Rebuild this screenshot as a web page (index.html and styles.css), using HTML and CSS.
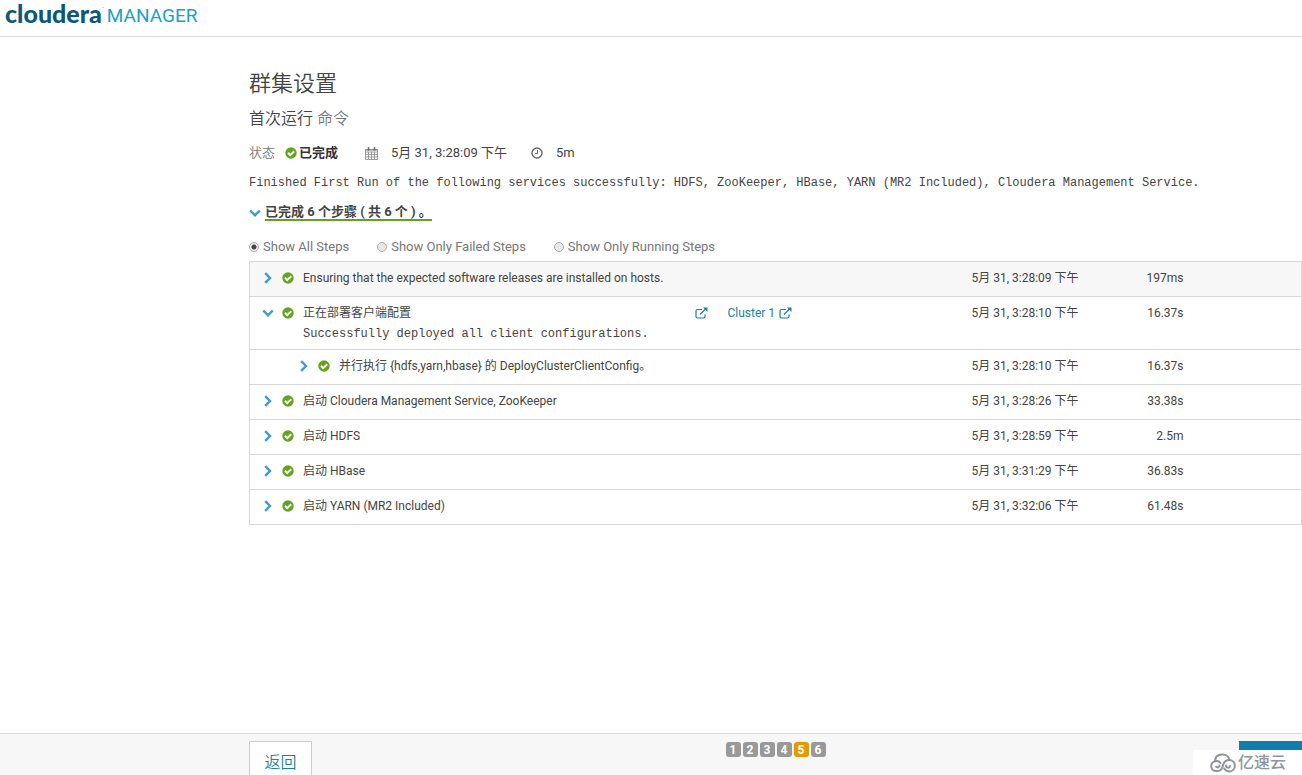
FILE: index.html
```html
<!DOCTYPE html>
<html lang="zh-CN">
<head>
<meta charset="utf-8">
<title>群集设置 - Cloudera Manager</title>
<link rel="stylesheet" href="styles.css">
</head>
<body>
<svg class="sprite" aria-hidden="true">
  <symbol id="check" viewBox="0 0 12 12"><circle cx="6" cy="6" r="5.700" fill="#63a41f"/><path d="M3 5.800l2.200 2.300L9.200 4.200" fill="none" stroke="#fff" stroke-width="2"/></symbol>
  <symbol id="right" viewBox="0 0 12 12"><path d="M3.200 1.200L8 6l-4.800 4.800" fill="none" stroke="#3b9bd2" stroke-width="2.400"/></symbol>
  <symbol id="down" viewBox="0 0 12 12"><path d="M1.200 3.500L6 8.300l4.800-4.800" fill="none" stroke="#3b9bd2" stroke-width="2.400"/></symbol>
  <symbol id="external" viewBox="0 0 13 13"><path d="M7 2.500H2.500Q1 2.500 1 4v5.500Q1 11 2.500 11h6q1.500 0 1.500-1.500V7.500M5 7.500l5.500-5.500" fill="none" stroke="#1c7f9f" stroke-width="1.200"/><path d="M8 .5h4.500V5z" fill="#1c7f9f"/></symbol>
</svg>
<header class="top">
  <a class="brand" href="#"><span class="brand-name">cloudera</span><span class="brand-dot">·</span><span class="brand-product">MANAGER</span></a>
</header>
<main class="content">
  <h1 class="title">群集设置</h1>
  <h2 class="subtitle">首次运行 <span class="muted">命令</span></h2>
  <div class="status">
    <span class="muted">状态</span>
    <span class="state"><svg class="icon"><use href="#check"/></svg><strong>已完成</strong></span>
    <svg class="calendar" viewBox="0 0 13 13"><path d="M.5 2.500h12v10H.5zM.5 5h12M.5 7.500h12M.5 10h12M3.500 5v7.500M6.500 5v7.500M9.500 5v7.500" fill="none" stroke="#888" stroke-width=".8"/><path d="M.5 3h12" stroke="#777"/><path d="M3.500 0v3.500M9.500 0v3.500" stroke="#666" stroke-width="1.500"/></svg>
    <span>5月 31, 3:28:09 下午</span>
    <svg class="clock" viewBox="0 0 12 12"><circle cx="6" cy="6" r="5" fill="none" stroke="#666" stroke-width="1.400"/><path d="M6.500 3v3.500H4" fill="none" stroke="#666"/></svg>
    <span>5m</span>
  </div>
  <p class="message">Finished First Run of the following services successfully: HDFS, ZooKeeper, HBase, YARN (MR2 Included), Cloudera Management Service.</p>
  <button class="summary" type="button"><svg class="icon"><use href="#down"/></svg><span class="summary-text">已完成 6 个步骤 ( 共 6 个 ) 。</span></button>
  <div class="filters">
    <label class="filter"><input type="radio" name="steps" checked>Show All Steps</label>
    <label class="filter"><input type="radio" name="steps">Show Only Failed Steps</label>
    <label class="filter"><input type="radio" name="steps">Show Only Running Steps</label>
  </div>
  <table class="steps">
    <colgroup><col><col class="col-links"><col class="col-time"><col class="col-duration"><col class="col-actions"></colgroup>
    <tbody>
    <tr class="shaded"><td><div class="step"><svg class="icon"><use href="#right"/></svg><svg class="icon"><use href="#check"/></svg><span>Ensuring that the expected software releases are installed on hosts.</span></div></td><td></td><td>5月 31, 3:28:09 下午</td><td class="duration">197ms</td><td></td></tr>
    <tr><td><div class="step"><svg class="icon"><use href="#down"/></svg><svg class="icon"><use href="#check"/></svg><span>正在部署客户端配置</span></div><div class="detail">Successfully deployed all client configurations.</div></td><td><div class="links"><a href="#" aria-label="详细信息"><svg class="external"><use href="#external"/></svg></a><a href="#">Cluster 1<svg class="external"><use href="#external"/></svg></a></div></td><td>5月 31, 3:28:10 下午</td><td class="duration">16.37s</td><td></td></tr>
    <tr><td><div class="step nested"><svg class="icon"><use href="#right"/></svg><svg class="icon"><use href="#check"/></svg><span>并行执行 {hdfs,yarn,hbase} 的 DeployClusterClientConfig。</span></div></td><td></td><td>5月 31, 3:28:10 下午</td><td class="duration">16.37s</td><td></td></tr>
    <tr><td><div class="step"><svg class="icon"><use href="#right"/></svg><svg class="icon"><use href="#check"/></svg><span>启动 Cloudera Management Service, ZooKeeper</span></div></td><td></td><td>5月 31, 3:28:26 下午</td><td class="duration">33.38s</td><td></td></tr>
    <tr><td><div class="step"><svg class="icon"><use href="#right"/></svg><svg class="icon"><use href="#check"/></svg><span>启动 HDFS</span></div></td><td></td><td>5月 31, 3:28:59 下午</td><td class="duration">2.5m</td><td></td></tr>
    <tr><td><div class="step"><svg class="icon"><use href="#right"/></svg><svg class="icon"><use href="#check"/></svg><span>启动 HBase</span></div></td><td></td><td>5月 31, 3:31:29 下午</td><td class="duration">36.83s</td><td></td></tr>
    <tr><td><div class="step"><svg class="icon"><use href="#right"/></svg><svg class="icon"><use href="#check"/></svg><span>启动 YARN (MR2 Included)</span></div></td><td></td><td>5月 31, 3:32:06 下午</td><td class="duration">61.48s</td><td></td></tr>
    </tbody>
  </table>
</main>
<footer class="wizard">
  <button class="back" type="button">返回</button>
  <ol class="pages"><li>1</li><li>2</li><li>3</li><li>4</li><li class="current">5</li><li>6</li></ol>
  <button class="next" type="button" aria-label="继续"></button>
</footer>
<div class="watermark">
  <svg class="cloud" viewBox="0 0 26 20"><g fill="none" stroke="#8f959d" stroke-width="2" stroke-linecap="round"><path d="M5 8C5.500 -.5 17.500-.5 19.500 6.500"/><path d="M10.500 10C8 6.500 1.200 8 1.200 13c0 6.500 9.500 6.500 11 1.500 1-5 3-7.500 7-7.500 7.500 0 7.500 11.500 0 11.500-2.500 0-4-1.500-5-3"/><path d="M6 13.500c1 1.500 3.500 1 3.500-1M16 12.500c0 2.500 3.500 3 4 .5"/></g></svg>
  <span>亿速云</span>
</div>
</body>
</html>
```
FILE: styles.css
```css
* { box-sizing: border-box; }
body {
  margin: 0;
  height: 100vh;
  display: flex;
  flex-direction: column;
  overflow: hidden;
  position: relative;
  background: #fff;
  color: #444;
  font: 13px/20px Roboto, "Noto Sans CJK SC", sans-serif;
}
button { font: inherit; color: inherit; cursor: pointer; }
a { color: #1c7f9f; text-decoration: none; }
.sprite { display: none; }
.icon { width: 12px; height: 12px; flex: none; }
.muted { color: #777; font-weight: 350; }

.top { flex: none; height: 37px; padding: 3px 5px; border-bottom: 1px solid #ddd; }
.brand { display: flex; line-height: 20px; }
.brand-name { font-family: Lato, sans-serif; font-size: 25px; font-weight: 900; color: #0d5878; }
.brand-dot { width: 5px; font-size: 8px; line-height: 10px; }
.brand-product { padding-top: 3px; font-family: Roboto, sans-serif; font-size: 19px; color: #1b9fd0; }

.content { flex: 1; min-height: 0; padding: 32px 0 0 249px; }
.title { margin: 0; font-size: 22px; line-height: 30px; font-weight: 350; }
.subtitle { margin: 8px 0 0; font-size: 16px; line-height: 24px; font-weight: 350; }
.status { display: flex; align-items: center; margin-top: 12px; }
.state { display: flex; align-items: center; gap: 2px; margin-left: 10px; color: #333; }
.calendar { width: 13px; height: 13px; margin: 0 13px 0 27px; }
.clock { width: 12px; height: 12px; margin: 0 13px 0 24px; }
.message { margin: 10px 0 0; font: 12px/20px "Liberation Mono", monospace; }
.summary { display: flex; align-items: center; gap: 4px; margin-top: 12px; padding: 0; border: 0; background: none; line-height: 14px; font-weight: 700; }
.summary-text { border-bottom: 2px solid #63a41f; }
.filters { display: flex; gap: 28px; margin-top: 16px; color: #777; }
.filter { display: flex; align-items: center; gap: 4px; }
.filter input {
  appearance: none;
  width: 10px;
  height: 10px;
  margin: 0;
  border: 1px solid #aaa;
  border-radius: 50%;
  background: #e8e8e8;
}
.filter input:checked { background: radial-gradient(circle, #444 0 2px, #eee 3px); }

.steps { width: 100%; margin-top: 4px; border-collapse: collapse; table-layout: fixed; border: 1px solid #d8d8d8; font-size: 12px; }
.steps td { height: 35px; padding: 6px 8px; border-bottom: 1px solid #d8d8d8; vertical-align: top; white-space: nowrap; }
.shaded { background: #f7f7f7; }
.col-links { width: 277px; }
.col-time { width: 140px; }
.col-duration { width: 88px; }
.col-actions { width: 110px; }
.steps .duration { text-align: right; }
.step { display: flex; align-items: center; gap: 8px; padding-left: 4px; }
.step span { padding-left: 1px; }
.nested { padding-left: 40px; }
.detail { padding-left: 45px; font: 12px/22px "Liberation Mono", monospace; margin-bottom: -2px; }
.links { display: flex; gap: 20px; }
.links a { display: flex; align-items: center; gap: 4px; }
.external { width: 13px; height: 13px; }

.wizard {
  flex: none;
  height: 42px;
  display: grid;
  grid-template-columns: 1fr auto 1fr;
  align-items: start;
  padding: 7px 0 0 249px;
  overflow: hidden;
  border-top: 1px solid #ddd;
  background: #f7f7f7;
}
.back { justify-self: start; width: 63px; height: 44px; border: 1px solid #ccc; background: #fff; color: #1c7f9f; font-size: 16px; font-weight: 350; }
.next { justify-self: end; width: 63px; height: 44px; border: 0; background: #117dab; }
.pages { display: flex; gap: 2px; margin: 1px 0 0; padding: 0; list-style: none; }
.pages li { width: 15px; height: 15px; border-radius: 3px; background: #999; color: #fff; font-size: 12px; line-height: 16px; font-weight: 700; text-align: center; }
.pages .current { background: #e39b00; }
.watermark {
  position: absolute;
  right: 0;
  bottom: 0;
  display: flex;
  align-items: center;
  gap: 2px;
  height: 25px;
  padding: 0 16px 0 17px;
  background: #fff;
  color: #8f959d;
  font-size: 16px;
  font-weight: 500;
}
.cloud { width: 26px; height: 20px; }
```
